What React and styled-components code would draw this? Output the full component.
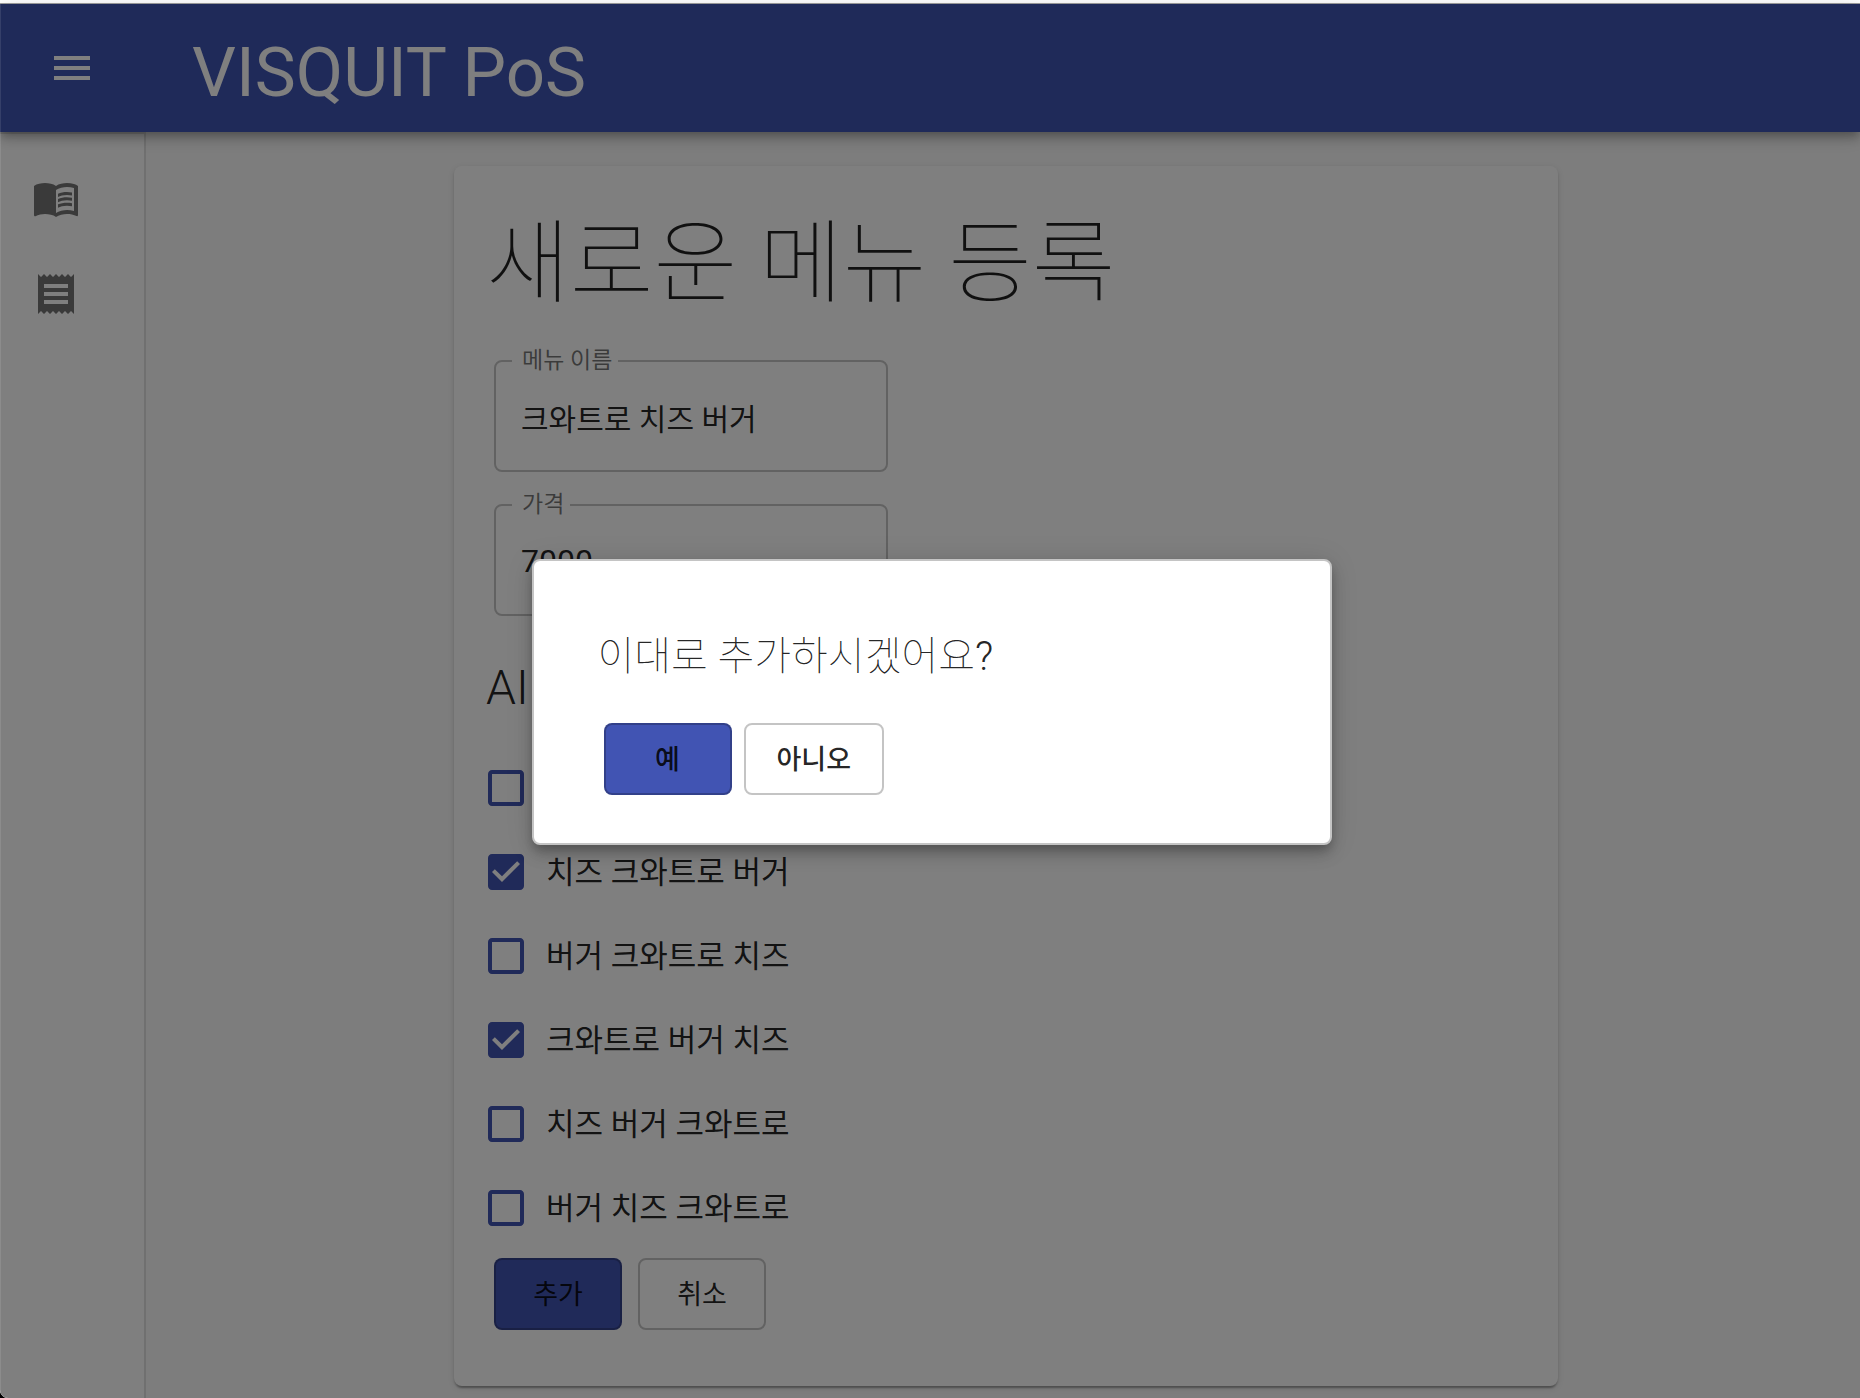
import React, { useState } from "react";
import styled, { createGlobalStyle } from "styled-components";

const GlobalStyle = createGlobalStyle`
  *, *::before, *::after { box-sizing: border-box; }
  body {
    margin: 0;
    background: #000;
    color: rgba(0, 0, 0, 0.87);
    font-family: Roboto, "Noto Sans CJK KR", sans-serif;
    font-size: 30px;
  }
  button, input { font-family: inherit; color: inherit; }
`;

const Window = styled.div`
  display: flex;
  flex-direction: column;
  min-height: 100vh;
  overflow: hidden;
  border-radius: 0 0 0 8px;
  background: #fafafa;
`;

const WindowEdge = styled.div`
  height: 4px;
  background: #fff;
  border-bottom: 1px solid #a0a0a0;
`;

const Shell = styled.div`
  position: relative;
  flex: 1;
  display: flex;
  flex-direction: column;
`;

const AppBar = styled.header`
  position: relative;
  z-index: 1;
  display: flex;
  align-items: center;
  gap: 72px;
  height: 128px;
  padding: 0 24px;
  background: #3f54b3;
  color: #fff;
  box-shadow: 0 4px 8px -2px rgba(0, 0, 0, 0.2), 0 8px 10px rgba(0, 0, 0, 0.14),
    0 2px 20px rgba(0, 0, 0, 0.12);
`;

const IconButton = styled.button`
  display: flex;
  padding: 24px;
  border: 0;
  background: none;
`;

const Glyph = styled.svg`
  width: 48px;
  height: 48px;
  fill: currentColor;
`;

const AppTitle = styled.h1`
  margin: 0;
  padding-top: 10px;
  font-size: 69px;
  line-height: 84px;
  font-weight: 400;
`;

const Body = styled.div`
  flex: 1;
  display: grid;
  grid-template-columns: 146px 1fr;
`;

const Drawer = styled.nav`
  padding: 16px 0;
  background: #fff;
  border-top: 2px solid rgba(0, 0, 0, 0.12);
  border-right: 2px solid rgba(0, 0, 0, 0.12);
`;

const DrawerLink = styled.a`
  display: flex;
  padding: 24px 32px;
  color: rgba(0, 0, 0, 0.54);
`;

const Main = styled.main`
  padding: 34px 0 11px 6px;
`;

const Card = styled.form`
  width: 100%;
  max-width: 1104px;
  margin: 0 auto;
  padding: 32px 32px 56px;
  border-radius: 8px;
  background: #fff;
  box-shadow: 0 4px 2px -2px rgba(0, 0, 0, 0.2), 0 2px 2px rgba(0, 0, 0, 0.14),
    0 2px 6px rgba(0, 0, 0, 0.12);
`;

const PageTitle = styled.h2`
  margin: 0 0 17px;
  font-size: 91px;
  line-height: 132px;
  font-weight: 100;
`;

const Fields = styled.div`
  display: grid;
  gap: 19px;
  width: 394px;
  margin-left: 8px;
`;

const Outline = styled.fieldset`
  min-width: 0;
  height: 125px;
  margin: 0;
  padding: 0;
  border: 2px solid rgba(0, 0, 0, 0.23);
  border-radius: 8px;
`;

const Legend = styled.legend`
  margin-left: 16px;
  padding: 0 6px 0 10px;
  font-size: 23px;
  line-height: 28px;
  color: rgba(0, 0, 0, 0.54);
`;

const FieldInput = styled.input`
  display: block;
  width: 100%;
  height: 95px;
  padding: 0 25px 12px;
  border: 0;
  outline: 0;
  background: none;
  font-size: ${(p) => (p.inputMode === "numeric" ? "32px" : "30px")};
`;

const SectionTitle = styled.h3`
  margin: 43px 0 29px;
  font-size: 48px;
  line-height: 58px;
  font-weight: 300;
`;

const Option = styled.label`
  position: relative;
  display: flex;
  align-items: center;
  gap: 22px;
  height: 84px;
  padding-left: 2px;
`;

const OptionInput = styled.input`
  position: absolute;
  width: 36px;
  height: 36px;
  margin: 0;
  opacity: 0;
`;

const OptionText = styled.span`
  padding-top: 2px;
  font-size: 31px;
  line-height: 48px;
`;

const CheckGlyph = styled.svg`
  width: 36px;
  height: 36px;
  fill: #4154b3;
`;

const Actions = styled.div`
  display: flex;
  gap: ${(p) => p.$gap};
  padding: 8px 8px 0;
`;

const Button = styled.button`
  min-width: 128px;
  height: 72px;
  padding: 2px 31px 0;
  border: 2px solid rgba(0, 0, 0, 0.23);
  border-radius: 8px;
  background: ${(p) => (p.$primary ? "#4154b3" : "transparent")};
  font-size: 27px;
  line-height: 48px;
  font-weight: ${(p) => (p.$strong ? 500 : 400)};
`;

const Backdrop = styled.div`
  position: absolute;
  inset: 0;
  z-index: 2;
  display: flex;
  align-items: center;
  justify-content: center;
  padding: 2px 0 0 2px;
  border-left: 1px solid rgba(255, 255, 255, 0.1);
  background: rgba(0, 0, 0, 0.5);
`;

const Dialog = styled.section`
  width: 800px;
  padding: 64px 64px 48px;
  border: 2px solid #c4c4c4;
  border-radius: 8px;
  background: #fff;
  box-shadow: 0 6px 10px -2px rgba(0, 0, 0, 0.2), 0 10px 16px rgba(0, 0, 0, 0.14),
    0 2px 28px rgba(0, 0, 0, 0.12);
`;

const DialogTitle = styled.h2`
  margin: 0 0 26px;
  font-size: 40px;
  line-height: 64px;
  font-weight: 100;
`;

const Mark = styled.span`
  font-weight: 300;
`;

const DialogActions = styled(Actions)`
  padding: 8px 6px 0;
`;

const MenuIcon = () => (
  <Glyph viewBox="0 0 24 24" aria-hidden="true">
    <path d="M3 18h18v-2H3v2zm0-5h18v-2H3v2zm0-7v2h18V6H3z" />
  </Glyph>
);

const BookIcon = () => (
  <Glyph viewBox="0 0 24 24" aria-hidden="true">
    <path d="M21 5c-1.11-.35-2.33-.5-3.5-.5-1.95 0-4.05.4-5.5 1.5-1.45-1.1-3.55-1.5-5.5-1.5S2.45 4.9 1 6v14.65c0 .25.25.5.5.5.1 0 .15-.05.25-.05C3.1 20.45 5.05 20 6.5 20c1.95 0 4.05.4 5.5 1.5 1.35-.85 3.8-1.5 5.5-1.5 1.65 0 3.35.3 4.75 1.05.1.05.15.05.25.05.25 0 .5-.25.5-.5V6c-.6-.45-1.25-.75-2-1zm0 13.5c-1.1-.35-2.3-.5-3.5-.5-1.7 0-4.15.65-5.5 1.5V8c1.35-.85 3.8-1.5 5.5-1.5 1.2 0 2.4.15 3.5.5v11.5z" />
    <path d="M17.5 10.5c.88 0 1.73.09 2.5.26V9.24c-.79-.15-1.64-.24-2.5-.24-1.7 0-3.24.29-4.5.83v1.66c1.13-.64 2.7-.99 4.5-.99zM13 12.49v1.66c1.13-.64 2.7-.99 4.5-.99.88 0 1.73.09 2.5.26V11.9c-.79-.15-1.64-.24-2.5-.24-1.7 0-3.24.3-4.5.83zM17.5 14.33c-1.7 0-3.24.29-4.5.83v1.66c1.13-.64 2.7-.99 4.5-.99.88 0 1.73.09 2.5.26v-1.52c-.79-.16-1.64-.24-2.5-.24z" />
  </Glyph>
);

const ReceiptIcon = () => (
  <Glyph viewBox="0 0 24 24" aria-hidden="true">
    <path d="M18 17H6v-2h12v2zm0-4H6v-2h12v2zm0-4H6V7h12v2zM3 22l1.5-1.5L6 22l1.5-1.5L9 22l1.5-1.5L12 22l1.5-1.5L15 22l1.5-1.5L18 22l1.5-1.5L21 22V2l-1.5 1.5L18 2l-1.5 1.5L15 2l-1.5 1.5L12 2l-1.5 1.5L9 2 7.5 3.5 6 2 4.5 3.5 3 2v20z" />
  </Glyph>
);

const CHECKED =
  "M19 3H5c-1.11 0-2 .9-2 2v14c0 1.1.89 2 2 2h14c1.11 0 2-.9 2-2V5c0-1.1-.89-2-2-2zm-9 14l-5-5 1.41-1.41L10 14.17l7.59-7.59L19 8l-9 9z";
const UNCHECKED =
  "M19 5v14H5V5h14m0-2H5c-1.1 0-2 .9-2 2v14c0 1.1.9 2 2 2h14c1.1 0 2-.9 2-2V5c0-1.1-.9-2-2-2z";

function Field({ id, label, numeric, initial }) {
  const [value, setValue] = useState(initial);
  return (
    <Outline>
      <Legend>
        <label htmlFor={id}>{label}</label>
      </Legend>
      <FieldInput
        id={id}
        type="text"
        inputMode={numeric ? "numeric" : "text"}
        value={value}
        onChange={(e) => setValue(e.target.value)}
      />
    </Outline>
  );
}

function CheckOption({ label, initial }) {
  const [on, setOn] = useState(initial);
  return (
    <Option>
      <OptionInput
        type="checkbox"
        aria-label={label || "AI"}
        checked={on}
        onChange={(e) => setOn(e.target.checked)}
      />
      <CheckGlyph viewBox="3 3 18 18" aria-hidden="true">
        <path d={on ? CHECKED : UNCHECKED} />
      </CheckGlyph>
      <OptionText>{label}</OptionText>
    </Option>
  );
}

const OPTIONS = [
  { label: "", on: false },
  { label: "치즈 크와트로 버거", on: true },
  { label: "버거 크와트로 치즈", on: false },
  { label: "크와트로 버거 치즈", on: true },
  { label: "치즈 버거 크와트로", on: false },
  { label: "버거 치즈 크와트로", on: false },
];

export default function App() {
  return (
    <Window lang="ko">
      <GlobalStyle />
      <WindowEdge />
      <Shell>
        <AppBar>
          <IconButton type="button" aria-label="메뉴">
            <MenuIcon />
          </IconButton>
          <AppTitle>VISQUIT PoS</AppTitle>
        </AppBar>
        <Body>
          <Drawer>
            <DrawerLink href="#menu" aria-label="메뉴">
              <BookIcon />
            </DrawerLink>
            <DrawerLink href="#receipt" aria-label="영수증">
              <ReceiptIcon />
            </DrawerLink>
          </Drawer>
          <Main>
            <Card onSubmit={(e) => e.preventDefault()}>
              <PageTitle>새로운 메뉴 등록</PageTitle>
              <Fields>
                <Field id="menu-name" label="메뉴 이름" initial="크와트로 치즈 버거" />
                <Field id="menu-price" label="가격" numeric initial="7000" />
              </Fields>
              <SectionTitle>AI</SectionTitle>
              {OPTIONS.map((o, i) => (
                <CheckOption key={i} label={o.label} initial={o.on} />
              ))}
              <Actions $gap="16px">
                <Button type="submit" $primary>추가</Button>
                <Button type="button">취소</Button>
              </Actions>
            </Card>
          </Main>
        </Body>
        <Backdrop>
          <Dialog role="dialog" aria-modal="true" aria-labelledby="confirm-title">
            <DialogTitle id="confirm-title">
              이대로 추가하시겠어요<Mark>?</Mark>
            </DialogTitle>
            <DialogActions $gap="12px">
              <Button type="button" $primary $strong>예</Button>
              <Button type="button" $strong>아니오</Button>
            </DialogActions>
          </Dialog>
        </Backdrop>
      </Shell>
    </Window>
  );
}
